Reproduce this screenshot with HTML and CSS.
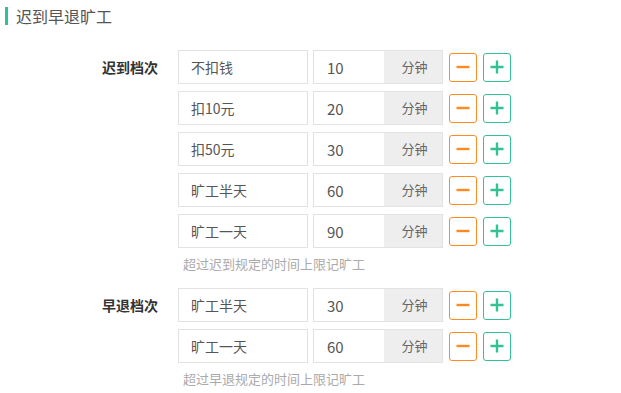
FILE: index.html
```html
<!DOCTYPE html>
<html>
    <head>
        <meta charset='utf-8'>
        <title>迟到早退旷工</title>
        <link rel="stylesheet" href="styles.css">
    </head>
    <body>
        <header class='title'>迟到早退旷工</header>
        <div class='group'>
            <label class='group-label'>迟到档次</label>
            <div class='rows'>
                <div class='row'>
                    <input class='name' value='不扣钱'>
                    <div class='minutes'><input class='num' value='10'><span class='unit'>分钟</span></div>
                    <button class='btn minus'><svg width='16' height='16' viewBox='0 0 16 16'><path d='M1.5 8h13' stroke='currentColor' stroke-width='2.4'/></svg></button>
                    <button class='btn plus'><svg width='16' height='16' viewBox='0 0 16 16'><path d='M1.5 8h13M8 1.5v13' stroke='currentColor' stroke-width='2.4'/></svg></button>
                </div>
                <div class='row'>
                    <input class='name' value='扣10元'>
                    <div class='minutes'><input class='num' value='20'><span class='unit'>分钟</span></div>
                    <button class='btn minus'><svg width='16' height='16' viewBox='0 0 16 16'><path d='M1.5 8h13' stroke='currentColor' stroke-width='2.4'/></svg></button>
                    <button class='btn plus'><svg width='16' height='16' viewBox='0 0 16 16'><path d='M1.5 8h13M8 1.5v13' stroke='currentColor' stroke-width='2.4'/></svg></button>
                </div>
                <div class='row'>
                    <input class='name' value='扣50元'>
                    <div class='minutes'><input class='num' value='30'><span class='unit'>分钟</span></div>
                    <button class='btn minus'><svg width='16' height='16' viewBox='0 0 16 16'><path d='M1.5 8h13' stroke='currentColor' stroke-width='2.4'/></svg></button>
                    <button class='btn plus'><svg width='16' height='16' viewBox='0 0 16 16'><path d='M1.5 8h13M8 1.5v13' stroke='currentColor' stroke-width='2.4'/></svg></button>
                </div>
                <div class='row'>
                    <input class='name' value='旷工半天'>
                    <div class='minutes'><input class='num' value='60'><span class='unit'>分钟</span></div>
                    <button class='btn minus'><svg width='16' height='16' viewBox='0 0 16 16'><path d='M1.5 8h13' stroke='currentColor' stroke-width='2.4'/></svg></button>
                    <button class='btn plus'><svg width='16' height='16' viewBox='0 0 16 16'><path d='M1.5 8h13M8 1.5v13' stroke='currentColor' stroke-width='2.4'/></svg></button>
                </div>
                <div class='row'>
                    <input class='name' value='旷工一天'>
                    <div class='minutes'><input class='num' value='90'><span class='unit'>分钟</span></div>
                    <button class='btn minus'><svg width='16' height='16' viewBox='0 0 16 16'><path d='M1.5 8h13' stroke='currentColor' stroke-width='2.4'/></svg></button>
                    <button class='btn plus'><svg width='16' height='16' viewBox='0 0 16 16'><path d='M1.5 8h13M8 1.5v13' stroke='currentColor' stroke-width='2.4'/></svg></button>
                </div>
                <div class='hint'>超过迟到规定的时间上限记旷工</div>
            </div>
        </div>
        <div class='group'>
            <label class='group-label'>早退档次</label>
            <div class='rows'>
                <div class='row'>
                    <input class='name' value='旷工半天'>
                    <div class='minutes'><input class='num' value='30'><span class='unit'>分钟</span></div>
                    <button class='btn minus'><svg width='16' height='16' viewBox='0 0 16 16'><path d='M1.5 8h13' stroke='currentColor' stroke-width='2.4'/></svg></button>
                    <button class='btn plus'><svg width='16' height='16' viewBox='0 0 16 16'><path d='M1.5 8h13M8 1.5v13' stroke='currentColor' stroke-width='2.4'/></svg></button>
                </div>
                <div class='row'>
                    <input class='name' value='旷工一天'>
                    <div class='minutes'><input class='num' value='60'><span class='unit'>分钟</span></div>
                    <button class='btn minus'><svg width='16' height='16' viewBox='0 0 16 16'><path d='M1.5 8h13' stroke='currentColor' stroke-width='2.4'/></svg></button>
                    <button class='btn plus'><svg width='16' height='16' viewBox='0 0 16 16'><path d='M1.5 8h13M8 1.5v13' stroke='currentColor' stroke-width='2.4'/></svg></button>
                </div>
                <div class='hint'>超过早退规定的时间上限记旷工</div>
            </div>
        </div>
    </body>
</html>
```
FILE: styles.css
```css
body {
    margin: 0;
    background: #fff;
    font-family: "Noto Sans CJK SC", "Noto Sans", sans-serif;
    color: #555;
}
.title {
    margin: 7px 0 0 5px;
    padding-left: 8px;
    border-left: 3px solid #30c196;
    height: 18px;
    line-height: 18px;
    font-size: 16px;
    color: #555;
}
.group {
    display: flex;
    align-items: flex-start;
    margin-top: 25px;
}
.group + .group {
    margin-top: 16px;
}
.group-label {
    width: 178px;
    padding-right: 20px;
    box-sizing: border-box;
    text-align: right;
    height: 34px;
    line-height: 34px;
    font-size: 14px;
    font-weight: bold;
    color: #333;
}
.rows {
    display: flex;
    flex-direction: column;
    gap: 7px;
}
.row {
    display: flex;
    align-items: center;
    height: 34px;
}
input {
    font-family: "Noto Sans CJK SC", "Noto Sans", sans-serif;
    font-size: 14px;
    color: #555;
    border: 0;
    outline: none;
    margin: 0;
    background: #fff;
}
input.name {
    width: 130px;
    height: 34px;
    box-sizing: border-box;
    border: 1px solid #e2e2e2;
    padding: 0 12px;
}
.minutes {
    display: flex;
    width: 130px;
    height: 34px;
    box-sizing: border-box;
    border: 1px solid #e2e2e2;
    margin-left: 5px;
}
input.num {
    width: 70px;
    height: 32px;
    padding: 0 13px;
    box-sizing: border-box;
    font-size: 15px;
}
.unit {
    flex: 1;
    background: #eee;
    text-align: center;
    line-height: 32px;
    font-size: 13px;
    color: #666;
    padding-left: 3px;
}
.btn {
    width: 28px;
    height: 29px;
    margin-left: 6px;
    padding: 0;
    background: #fff;
    border-radius: 3px;
    display: flex;
    align-items: center;
    justify-content: center;
}
.btn.minus {
    border: 1px solid #ff8a22;
    color: #ff8a22;
}
.btn.plus {
    border: 1px solid #33c196;
    color: #33c196;
}
.hint {
    margin-top: 1px;
    padding-left: 5px;
    line-height: 16px;
    font-size: 13px;
    color: #aaa;
}
```
